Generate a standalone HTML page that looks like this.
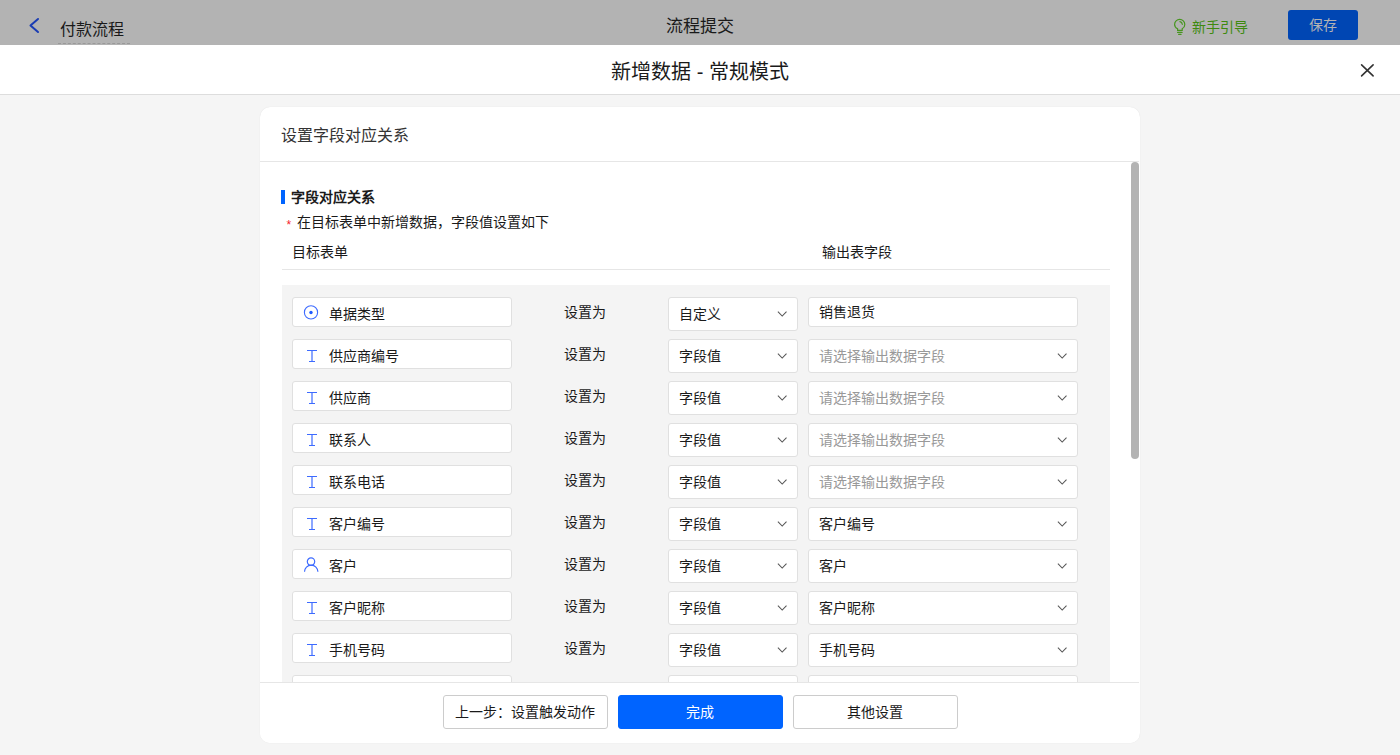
<!DOCTYPE html>
<html lang="zh-CN"><head><meta charset="utf-8">
<style>
*{margin:0;padding:0;box-sizing:border-box}
html,body{width:1400px;height:755px;overflow:hidden;font-family:"Liberation Sans",sans-serif;background:#f5f5f5;position:relative}
.abs{position:absolute}
.top{left:0;top:0;width:1400px;height:45px;background:#b3b3b3}
.back{left:60px;top:20px;font-size:16px;color:#1a1a1a;line-height:20px}
.toptitle{left:0;width:1400px;top:17px;text-align:center;font-size:17px;color:#1a1a1a;line-height:20px}
.guide{left:1192px;top:18px;font-size:14px;color:#3e8a0f;line-height:18px}
.save{left:1288px;top:10px;width:70px;height:30px;background:#0046b3;border-radius:3px;color:#b3b3b3;font-size:14px;line-height:30px;text-align:center}
.mhead{left:0;top:45px;width:1400px;height:50px;background:#fff;border-bottom:1px solid #dddddd}
.mtitle{left:0;width:1400px;top:60px;text-align:center;font-size:20px;color:#1a1a1a;line-height:24px}
.card{left:260px;top:107px;width:880px;height:636px;background:#fff;border-radius:10px;overflow:hidden;box-shadow:0 0 1px rgba(0,0,0,.12)}
.chead{left:0;top:0;width:879px;height:55px;border-bottom:1px solid #e6e6e6}
.ctitle{left:21px;top:19px;font-size:16px;color:#333;line-height:20px}
.sbar{left:871px;top:55px;width:8px;height:297px;background:#b3b3b3;border-radius:4px}
.bar{left:21px;top:83px;width:4px;height:14px;background:#0064ff}
.sec{left:31px;top:81px;font-size:14px;font-weight:bold;color:#1a1a1a;line-height:18px}
.ast{left:26.5px;top:110.5px;font-size:12px;color:#f5222d;line-height:14px}
.note{left:37px;top:106px;font-size:14px;color:#1a1a1a;line-height:18px}
.col1{left:32px;top:136px;font-size:14px;color:#1a1a1a;line-height:18px}
.col2{left:562px;top:136px;font-size:14px;color:#1a1a1a;line-height:18px}
.hline{left:22px;top:162px;width:828px;height:1px;background:#e6e6e6}
.tbl{left:22px;top:178px;width:828px;height:400px;background:#f4f4f4}
.row{position:absolute;left:0;width:828px;height:42px}
.fld{position:absolute;left:10px;top:12px;width:220px;height:30px;background:#fff;border:1px solid #e0e0e0;border-radius:3px}
.fld span{position:absolute;left:36px;top:7px;font-size:14px;line-height:18px;color:#1a1a1a}
.fld svg{position:absolute;left:9px;top:7px}
.setto{position:absolute;left:282px;top:18px;font-size:14px;line-height:18px;color:#1a1a1a}
.sel{position:absolute;left:386px;top:12px;width:130px;height:34px;background:#fff;border:1px solid #e0e0e0;border-radius:3px}
.sel span,.out span{position:absolute;left:10px;top:6.5px;font-size:14px;line-height:18px;color:#1a1a1a}
.sel svg,.out svg{position:absolute;right:9px;top:12px}
.out{position:absolute;left:526px;top:12px;width:270px;height:34px;background:#fff;border:1px solid #e0e0e0;border-radius:3px}
.out span.ph{color:#999}
.foot{left:0;top:575px;width:879px;height:61px;background:#fff;border-top:1px solid #e6e6e6}
.btn{position:absolute;top:12px;width:165px;height:34px;border:1px solid #ccc;border-radius:3px;background:#fff;font-size:14px;line-height:32px;text-align:center;padding-right:2px;color:#1a1a1a}
.btn.pri{background:#0064ff;border-color:#0064ff;color:#fff}
</style></head><body>
<div class="abs top"></div>
<svg class="abs" style="left:26px;top:16px" width="16" height="20" viewBox="0 0 16 20"><path d="M12 3 L4.5 9.5 L12 16" fill="none" stroke="#1a3cb3" stroke-width="2" stroke-linecap="round" stroke-linejoin="round"/></svg>
<div class="abs back">付款流程</div>
<div class="abs" style="left:58px;top:43px;width:72px;height:0;border-top:1px dashed #999"></div>
<div class="abs toptitle">流程提交</div>
<svg class="abs" style="left:1168px;top:14px" width="24" height="24" viewBox="0 0 24 24"><g fill="none" stroke="#47951f" stroke-width="1.2" stroke-linecap="round"><path d="M9.6 16.4 L9.6 14.8 C7.7 13.9 6.6 12.3 6.6 10.5 A5.1 5.1 0 0 1 16.8 10.5 C16.8 12.3 15.8 13.9 14.2 14.8 L14.2 16.4 Z"/><path d="M9.6 18.4 H14.1 M10.6 20.3 H13.1"/><path d="M11.9 7.7 A3 3 0 0 1 14.3 10.3"/></g></svg>
<div class="abs guide">新手引导</div>
<div class="abs save">保存</div>

<div class="abs mhead"></div>
<div class="abs mtitle">新增数据 - 常规模式</div>
<svg class="abs" style="left:1360px;top:63px" width="15" height="15" viewBox="0 0 15 15"><path d="M1.6 1.8 L13.1 12.9 M13.1 1.8 L1.6 12.9" stroke="#333" stroke-width="1.6" stroke-linecap="round"/></svg>

<div class="abs card">
  <div class="abs chead"></div>
  <div class="abs ctitle">设置字段对应关系</div>
  <div class="abs sbar"></div>
  <div class="abs bar"></div>
  <div class="abs sec">字段对应关系</div>
  <div class="abs ast">*</div>
  <div class="abs note">在目标表单中新增数据，字段值设置如下</div>
  <div class="abs col1">目标表单</div>
  <div class="abs col2">输出表字段</div>
  <div class="abs hline"></div>
  <div class="abs tbl" id="tbl"><div class="row" style="top:0px"><div class="fld"><svg width="18" height="18" viewBox="0 0 18 18"><circle cx="9" cy="7.4" r="6.6" fill="none" stroke="#3d6bff" stroke-width="1.1"/><circle cx="9" cy="7.5" r="1.7" fill="#1f5bff"/></svg><span>单据类型</span></div><div class="setto">设置为</div><div class="sel"><span>自定义</span><svg width="12" height="8" viewBox="0 0 12 8"><path d="M1.9 1.7 L6.2 6 L10.5 1.7" fill="none" stroke="#555" stroke-width="1.05"/></svg></div><div class="out inp" style="height:30px"><span style="top:5px">销售退货</span></div></div>
<div class="row" style="top:42px"><div class="fld"><svg width="18" height="18" viewBox="0 0 18 18"><path d="M5 3.5 H15 M10 3.5 V14.5 M7 14.5 H13" fill="none" stroke="#3d6bff" stroke-width="1.2"/></svg><span>供应商编号</span></div><div class="setto">设置为</div><div class="sel"><span>字段值</span><svg width="12" height="8" viewBox="0 0 12 8"><path d="M1.9 1.7 L6.2 6 L10.5 1.7" fill="none" stroke="#555" stroke-width="1.05"/></svg></div><div class="out"><span class="ph">请选择输出数据字段</span><svg width="12" height="8" viewBox="0 0 12 8"><path d="M1.9 1.7 L6.2 6 L10.5 1.7" fill="none" stroke="#555" stroke-width="1.05"/></svg></div></div>
<div class="row" style="top:84px"><div class="fld"><svg width="18" height="18" viewBox="0 0 18 18"><path d="M5 3.5 H15 M10 3.5 V14.5 M7 14.5 H13" fill="none" stroke="#3d6bff" stroke-width="1.2"/></svg><span>供应商</span></div><div class="setto">设置为</div><div class="sel"><span>字段值</span><svg width="12" height="8" viewBox="0 0 12 8"><path d="M1.9 1.7 L6.2 6 L10.5 1.7" fill="none" stroke="#555" stroke-width="1.05"/></svg></div><div class="out"><span class="ph">请选择输出数据字段</span><svg width="12" height="8" viewBox="0 0 12 8"><path d="M1.9 1.7 L6.2 6 L10.5 1.7" fill="none" stroke="#555" stroke-width="1.05"/></svg></div></div>
<div class="row" style="top:126px"><div class="fld"><svg width="18" height="18" viewBox="0 0 18 18"><path d="M5 3.5 H15 M10 3.5 V14.5 M7 14.5 H13" fill="none" stroke="#3d6bff" stroke-width="1.2"/></svg><span>联系人</span></div><div class="setto">设置为</div><div class="sel"><span>字段值</span><svg width="12" height="8" viewBox="0 0 12 8"><path d="M1.9 1.7 L6.2 6 L10.5 1.7" fill="none" stroke="#555" stroke-width="1.05"/></svg></div><div class="out"><span class="ph">请选择输出数据字段</span><svg width="12" height="8" viewBox="0 0 12 8"><path d="M1.9 1.7 L6.2 6 L10.5 1.7" fill="none" stroke="#555" stroke-width="1.05"/></svg></div></div>
<div class="row" style="top:168px"><div class="fld"><svg width="18" height="18" viewBox="0 0 18 18"><path d="M5 3.5 H15 M10 3.5 V14.5 M7 14.5 H13" fill="none" stroke="#3d6bff" stroke-width="1.2"/></svg><span>联系电话</span></div><div class="setto">设置为</div><div class="sel"><span>字段值</span><svg width="12" height="8" viewBox="0 0 12 8"><path d="M1.9 1.7 L6.2 6 L10.5 1.7" fill="none" stroke="#555" stroke-width="1.05"/></svg></div><div class="out"><span class="ph">请选择输出数据字段</span><svg width="12" height="8" viewBox="0 0 12 8"><path d="M1.9 1.7 L6.2 6 L10.5 1.7" fill="none" stroke="#555" stroke-width="1.05"/></svg></div></div>
<div class="row" style="top:210px"><div class="fld"><svg width="18" height="18" viewBox="0 0 18 18"><path d="M5 3.5 H15 M10 3.5 V14.5 M7 14.5 H13" fill="none" stroke="#3d6bff" stroke-width="1.2"/></svg><span>客户编号</span></div><div class="setto">设置为</div><div class="sel"><span>字段值</span><svg width="12" height="8" viewBox="0 0 12 8"><path d="M1.9 1.7 L6.2 6 L10.5 1.7" fill="none" stroke="#555" stroke-width="1.05"/></svg></div><div class="out"><span>客户编号</span><svg width="12" height="8" viewBox="0 0 12 8"><path d="M1.9 1.7 L6.2 6 L10.5 1.7" fill="none" stroke="#555" stroke-width="1.05"/></svg></div></div>
<div class="row" style="top:252px"><div class="fld"><svg width="18" height="18" viewBox="0 0 18 18"><circle cx="9" cy="4.6" r="3.7" fill="none" stroke="#3d6bff" stroke-width="1.2"/><path d="M2.5 14.8 A6.7 6.7 0 0 1 15.9 14.8" fill="none" stroke="#3d6bff" stroke-width="1.2"/></svg><span>客户</span></div><div class="setto">设置为</div><div class="sel"><span>字段值</span><svg width="12" height="8" viewBox="0 0 12 8"><path d="M1.9 1.7 L6.2 6 L10.5 1.7" fill="none" stroke="#555" stroke-width="1.05"/></svg></div><div class="out"><span>客户</span><svg width="12" height="8" viewBox="0 0 12 8"><path d="M1.9 1.7 L6.2 6 L10.5 1.7" fill="none" stroke="#555" stroke-width="1.05"/></svg></div></div>
<div class="row" style="top:294px"><div class="fld"><svg width="18" height="18" viewBox="0 0 18 18"><path d="M5 3.5 H15 M10 3.5 V14.5 M7 14.5 H13" fill="none" stroke="#3d6bff" stroke-width="1.2"/></svg><span>客户昵称</span></div><div class="setto">设置为</div><div class="sel"><span>字段值</span><svg width="12" height="8" viewBox="0 0 12 8"><path d="M1.9 1.7 L6.2 6 L10.5 1.7" fill="none" stroke="#555" stroke-width="1.05"/></svg></div><div class="out"><span>客户昵称</span><svg width="12" height="8" viewBox="0 0 12 8"><path d="M1.9 1.7 L6.2 6 L10.5 1.7" fill="none" stroke="#555" stroke-width="1.05"/></svg></div></div>
<div class="row" style="top:336px"><div class="fld"><svg width="18" height="18" viewBox="0 0 18 18"><path d="M5 3.5 H15 M10 3.5 V14.5 M7 14.5 H13" fill="none" stroke="#3d6bff" stroke-width="1.2"/></svg><span>手机号码</span></div><div class="setto">设置为</div><div class="sel"><span>字段值</span><svg width="12" height="8" viewBox="0 0 12 8"><path d="M1.9 1.7 L6.2 6 L10.5 1.7" fill="none" stroke="#555" stroke-width="1.05"/></svg></div><div class="out"><span>手机号码</span><svg width="12" height="8" viewBox="0 0 12 8"><path d="M1.9 1.7 L6.2 6 L10.5 1.7" fill="none" stroke="#555" stroke-width="1.05"/></svg></div></div>
<div class="row" style="top:378px"><div class="fld"><span></span></div><div class="sel"><span></span></div><div class="out"></div></div></div>
  <div class="abs foot">
    <div class="btn" style="left:183px">上一步：设置触发动作</div>
    <div class="btn pri" style="left:358px">完成</div>
    <div class="btn" style="left:533px">其他设置</div>
  </div>
</div>
</body></html>
